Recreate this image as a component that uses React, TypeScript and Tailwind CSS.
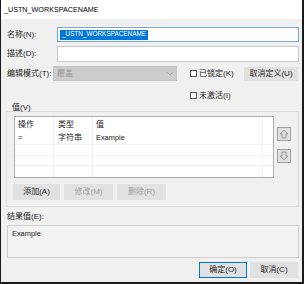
import React from "react";

const font = { fontFamily: '"Liberation Sans", "Noto Sans CJK SC", sans-serif' };

function Check({ label }: { label: string }) {
  return (
    <div className="flex items-center gap-[2px] text-[8px] text-[#222]">
      <span className="w-[7px] h-[7px] border border-[#555] bg-white" />
      <span>{label}</span>
    </div>
  );
}

export default function App() {
  return (
    <div
      className="w-[304px] h-[284px] bg-[#f0f0f0] border-l border-r-2 border-b-2 border-[#1a1a1a] flex flex-col text-[8px] text-[#222] leading-none"
      style={font}
    >
      <div className="h-[19px] bg-white flex items-center pl-[3px] text-[7.2px] text-black">
        _USTN_WORKSPACENAME
      </div>
      <div className="flex flex-col pl-[5px] pr-[3px]">
        {/* Name */}
        <div className="flex items-center mt-[8px] h-[15px]">
          <div className="w-[51px] pl-[1px]">名称(N):</div>
          <div className="flex-1 h-[15px] border border-[#7aa7d9] bg-white flex items-center pl-[2px]">
            <span className="bg-[#0078d7] text-white px-[2px] h-[10px] flex items-center text-[6.4px]">_USTN_WORKSPACENAME</span>
          </div>
        </div>
        {/* Desc */}
        <div className="flex items-center mt-[4px] h-[16px]">
          <div className="w-[51px] pl-[1px]">描述(D):</div>
          <div className="flex-1 h-[16px] border border-[#c8c8c8] bg-white" />
        </div>
        {/* Mode */}
        <div className="flex items-center mt-[4px] h-[15px]">
          <div className="w-[47px] pl-[1px]">编辑模式(T):</div>
          <div className="w-[124px] h-[15px] bg-[#cccccc] border border-[#c4c4c4] flex items-center justify-between pl-[3px] pr-[3px] text-[#9a9a9a]">
            <span>覆盖</span>
            <svg width="6" height="4" viewBox="0 0 6 4"><path d="M0.5 0.5 L3 3 L5.5 0.5" fill="none" stroke="#9a9a9a" strokeWidth="0.8" /></svg>
          </div>
          <div className="ml-[13px] w-[54px]"><Check label="已锁定(K)" /></div>
          <div className="w-[54px] h-[14px] bg-[#e1e1e1] flex items-center justify-center">取消定义(U)</div>
        </div>
        {/* Inactive */}
        <div className="flex items-center mt-[9px] h-[11px] pl-[184px]">
          <Check label="未激活(I)" />
        </div>
        {/* Group */}
        <div className="mt-[2px] relative">
          <div className="pl-[6px] h-[9px] flex items-center">值(V)</div>
          <div className="border border-[#dcdcdc] -mt-[1px] h-[96px] flex flex-col pl-[7px] pt-[4px]">
            <div className="flex">
              <div className="w-[260px] h-[62px] border border-[#adadad] bg-white relative flex flex-col">
                <div className="flex h-[13px] items-center mt-[1px]">
                  <div className="w-[39px] pl-[3px]">操作</div>
                  <div className="w-[39px] pl-[4px]">类型</div>
                  <div className="pl-[3px]">值</div>
                </div>
                <div className="flex h-[13px] items-center">
                  <div className="w-[39px] pl-[3px]">=</div>
                  <div className="w-[39px] pl-[4px]">字符串</div>
                  <div className="pl-[3px] text-[7.4px]">Example</div>
                </div>
                <div className="border-t border-[#f0f0f0] mt-[0px] h-[11px]" />
                <div className="border-t border-[#f0f0f0] h-[10px]" />
                <div className="border-t border-[#f0f0f0]" />
                <div className="absolute top-0 bottom-0 left-[38px] border-l border-[#f0f0f0]" />
                <div className="absolute top-0 bottom-0 left-[77px] border-l border-[#f0f0f0]" />
                <div className="absolute top-0 bottom-0 left-[247px] border-l border-[#f0f0f0]" />
              </div>
              <div className="flex flex-col ml-[3px] mt-[11px] gap-[8px]">
                <div className="w-[14px] h-[14px] bg-[#e1e1e1] border border-[#a0a0a0] flex items-center justify-center">
                  <svg width="10" height="10" viewBox="0 0 10 10"><path d="M5 1 L9 5 L7 5 L7 9 L3 9 L3 5 L1 5 Z" fill="#dadada" stroke="#8a8a8a" strokeWidth="0.8" /></svg>
                </div>
                <div className="w-[14px] h-[14px] bg-[#e1e1e1] border border-[#a0a0a0] flex items-center justify-center">
                  <svg width="10" height="10" viewBox="0 0 10 10"><path d="M5 9 L9 5 L7 5 L7 1 L3 1 L3 5 L1 5 Z" fill="#dadada" stroke="#8a8a8a" strokeWidth="0.8" /></svg>
                </div>
              </div>
            </div>
            <div className="flex mt-[6px] gap-[4px] -ml-[1px]">
              <div className="w-[47px] h-[16px] bg-[#e1e1e1] flex items-center justify-center">添加(A)</div>
              <div className="w-[49px] h-[16px] bg-[#e1e1e1] flex items-center justify-center text-[#a0a0a0]">修改(M)</div>
              <div className="w-[49px] h-[16px] bg-[#e1e1e1] flex items-center justify-center text-[#a0a0a0]">删除(R)</div>
            </div>
          </div>
        </div>
        <div className="mt-[5px] pl-[1px] h-[9px] flex items-center">结果值(E):</div>
        <div className="mt-[4px] ml-[1px] h-[33px] border border-[#cfcfcf] bg-[#f2f2f2] pl-[4px] pt-[4px] text-[7.4px]">Example</div>
        <div className="flex justify-end gap-[3px] mt-[4px] pr-[1px]">
          <div className="w-[48px] h-[16px] bg-[#e1e1e1] border border-[#0078d7] flex items-center justify-center">确定(O)</div>
          <div className="w-[48px] h-[16px] bg-[#e1e1e1] flex items-center justify-center">取消(C)</div>
        </div>
      </div>
    </div>
  );
}
